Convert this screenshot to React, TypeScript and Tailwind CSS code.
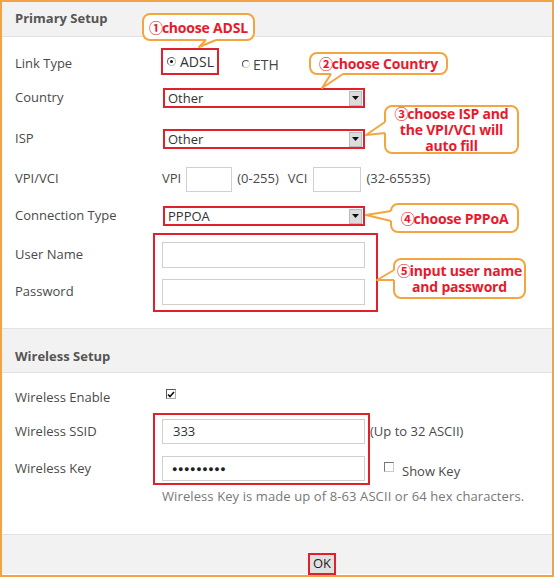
import React from "react";

const RED = "border-[#e0202a]";

function Select({ value }: { value: string }) {
  return (
    <div className={`w-[202px] h-[20px] border-2 ${RED} bg-white flex items-center justify-between`}>
      <span className="pl-[3px] text-[13px] leading-none text-[#333]">{value}</span>
      <span className="w-[13px] h-[15px] mr-[1px] bg-[#dcdcdc] border border-[#bbb] flex items-center justify-center">
        <svg width="7" height="4" viewBox="0 0 7 4">
          <polygon points="0,0 7,0 3.5,4" fill="#111" />
        </svg>
      </span>
    </div>
  );
}

function Input({ w }: { w: string }) {
  return <div className={`${w} h-[26px] border border-[#cfcfcf] bg-white`} />;
}

function Num({ c }: { c: string }) {
  return <span className="font-['Noto_Sans_CJK_SC',sans-serif] font-bold text-[14px] mr-[-1px]">{c}</span>;
}

function Callout({
  left,
  top,
  w,
  h,
  children,
}: {
  left: number;
  top: number;
  w: number;
  h: number;
  children: React.ReactNode;
}) {
  return (
    <div
      className="absolute border-2 border-[#f3a63f] rounded-[8px] bg-white flex items-center justify-center text-center whitespace-nowrap tracking-[-0.2px] text-[#e8192c] font-bold text-[14px] leading-[16px] font-['Open_Sans',sans-serif]"
      style={{ left, top, width: w, height: h }}
    >
      <div>{children}</div>
    </div>
  );
}

function Tail({ base1, tip, base2, inner1, inner2 }: { base1: number[]; tip: number[]; base2: number[]; inner1: number[]; inner2: number[] }) {
  return (
    <>
      <polygon
        points={`${inner1.join(",")} ${base1.join(",")} ${tip.join(",")} ${base2.join(",")} ${inner2.join(",")}`}
        fill="white"
      />
      <polyline
        points={`${base1.join(",")} ${tip.join(",")} ${base2.join(",")}`}
        fill="none"
        stroke="#f3a63f"
        strokeWidth="2"
        strokeLinejoin="round"
      />
    </>
  );
}

export default function App() {
  return (
    <div className="relative w-[554px] h-[577px] border-2 border-[#f2a444] bg-white overflow-hidden font-['Open_Sans',sans-serif] text-[13px] text-[#4a4a4a]">
      {/* Primary Setup header */}
      <div className="h-[35px] bg-[#f2f2f2] border-b border-[#e2e2e2] flex items-center pl-[13px] font-bold text-[#555] text-[13px]">
        Primary Setup
      </div>

      {/* Primary body */}
      <div className="pl-[13px] pt-[10px] pb-[16px]">
        <div className="flex items-center h-[34px]">
          <div className="w-[147px]">Link Type</div>
          <div className={`-ml-[1px] -mt-[6px] w-[58px] h-[27px] border-2 ${RED} flex items-center pl-[4px]`}>
            <span className="w-[9px] h-[9px] rounded-full border border-[#666] border-r-[#bbb] border-b-[#bbb] flex items-center justify-center">
              <span className="w-[3px] h-[3px] rounded-full bg-[#111]" />
            </span>
            <span className="ml-[4px] text-[14px] text-[#333]">ADSL</span>
          </div>
          <span className="ml-[23px] w-[8px] h-[8px] rounded-full border border-[#555] border-r-[#ddd] border-b-[#ccc]" />
          <span className="ml-[3px] text-[14px] text-[#444]">ETH</span>
        </div>

        <div className="flex items-center h-[34px]">
          <div className="w-[147px]">Country</div>
          <div className="ml-[1px]">
            <Select value="Other" />
          </div>
        </div>

        <div className="flex items-center h-[34px] mt-[7px]">
          <div className="w-[147px]">ISP</div>
          <div className="ml-[1px]">
            <Select value="Other" />
          </div>
        </div>

        <div className="flex items-center h-[34px] mt-[6px]">
          <div className="w-[147px]">VPI/VCI</div>
          <span>VPI</span>
          <div className="ml-[5px] w-[46px] h-[25px] border border-[#d0d0d0]" />
          <span className="ml-[5px]">(0-255)</span>
          <span className="ml-[9px]">VCI</span>
          <div className="ml-[6px] w-[48px] h-[25px] border border-[#d0d0d0]" />
          <span className="ml-[5px]">(32-65535)</span>
        </div>

        <div className="flex items-center h-[34px] mt-[3px]">
          <div className="w-[147px]">Connection Type</div>
          <div className="ml-[1px]">
            <Select value="PPPOA" />
          </div>
        </div>

        <div className="flex mt-[0px]">
          <div className="w-[138px] flex flex-col pt-[9px] gap-[11px]">
            <div className="h-[26px] flex items-center">User Name</div>
            <div className="h-[26px] flex items-center">Password</div>
          </div>
          <div className={`w-[225px] border-2 ${RED} pl-[7px] pt-[7px] pb-[5px] flex flex-col gap-[11px]`}>
            <Input w="w-[203px]" />
            <Input w="w-[203px]" />
          </div>
        </div>
      </div>

      {/* Wireless header */}
      <div className="h-[45px] bg-[#f2f2f2] border-t border-b border-[#e2e2e2] flex items-center pt-[12px] pl-[13px] font-bold text-[#555] text-[13px]">
        Wireless Setup
      </div>

      {/* Wireless body */}
      <div className="pl-[13px] pt-[10px] h-[162px] border-b border-[#e2e2e2]">
        <div className="flex items-center h-[30px]">
          <div className="w-[147px]">Wireless Enable</div>
          <span className="ml-[4px] -mt-[8px] w-[10px] h-[10px] border border-[#555] border-r-[#aaa] border-b-[#aaa] flex items-center justify-center bg-white">
            <svg width="8" height="7" viewBox="0 0 8 7">
              <polyline points="1,3.5 3,5.5 7,1" fill="none" stroke="#111" strokeWidth="1.6" />
            </svg>
          </span>
        </div>

        <div className="flex">
          <div className="w-[138px] flex flex-col pt-[6px] gap-[12px]">
            <div className="h-[25px] flex items-center">Wireless SSID</div>
            <div className="h-[25px] flex items-center">Wireless Key</div>
          </div>
          <div className={`w-[217px] border-2 ${RED} pl-[7px] pt-[4px] pb-[2px] flex flex-col gap-[12px]`}>
            <div className="w-[203px] h-[25px] border border-[#cfcfcf] flex items-center pl-[10px] text-[13px] text-[#333]">333</div>
            <div className="w-[203px] h-[25px] border border-[#cfcfcf] flex items-center pl-[9px]">
              <span className="text-[9px] tracking-[0.6px] text-[#222]">●●●●●●●●●</span>
            </div>
          </div>
          <div className="flex flex-col pt-[6px] gap-[12px]">
            <div className="h-[25px] flex items-center">(Up to 32 ASCII)</div>
            <div className="h-[25px] flex items-center pl-[14px]">
              <span className="-mt-[4px] w-[10px] h-[10px] border border-[#777] border-r-[#ccc] border-b-[#ccc] bg-white" />
              <span className="ml-[8px] mt-[6px]">Show Key</span>
            </div>
          </div>
        </div>

        <div className="pl-[147px] mt-[3px] text-[#777] leading-[16px] tracking-[0.1px]">
          Wireless Key is made up of 8-63 ASCII or 64 hex characters.
        </div>
      </div>

      {/* Footer */}
      <div className="h-[39px] bg-[#f2f2f2] pt-[18px] pl-[306px]">
        <div className={`w-[28px] h-[22px] border-2 ${RED} bg-[#e1e1e1] flex items-center justify-center text-[13px] text-[#222]`}>
          OK
        </div>
      </div>

      {/* Callouts */}
      <Callout left={140} top={11} w={113} h={28}>
        <Num c="①" />choose ADSL
      </Callout>
      <Callout left={307} top={50} w={139} h={23}>
        <Num c="②" />choose Country
      </Callout>
      <Callout left={382} top={103} w={135} h={49}>
        <Num c="③" />choose ISP and
        <br />
        the VPI/VCI will
        <br />
        auto fill
      </Callout>
      <Callout left={388} top={201} w={129} h={30}>
        <Num c="④" />choose PPPoA
      </Callout>
      <Callout left={391} top={256} w={133} h={41}>
        <Num c="⑤" />input user name
        <br />
        and password
      </Callout>

      <svg className="absolute left-0 top-0 pointer-events-none" width="550" height="573" viewBox="0 0 550 573">
        <Tail base1={[204, 38]} tip={[197, 45]} base2={[214, 38]} inner1={[204, 35]} inner2={[214, 35]} />
        <Tail base1={[329, 72]} tip={[320, 86]} base2={[341, 72]} inner1={[329, 69]} inner2={[341, 69]} />
        <Tail base1={[383, 120]} tip={[364, 133]} base2={[383, 131]} inner1={[386, 120]} inner2={[386, 131]} />
        <Tail base1={[389, 209]} tip={[364, 213]} base2={[389, 219]} inner1={[392, 209]} inner2={[392, 219]} />
        <Tail base1={[392, 268]} tip={[375, 278]} base2={[392, 278]} inner1={[395, 268]} inner2={[395, 278]} />
      </svg>
    </div>
  );
}
